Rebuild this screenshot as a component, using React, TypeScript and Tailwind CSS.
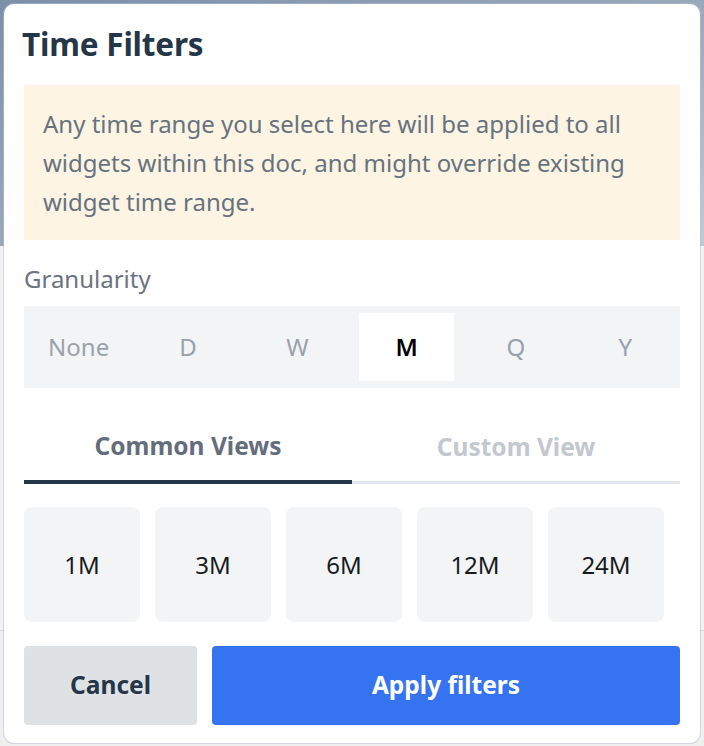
import { useState } from "react";

const granularities = ["None", "D", "W", "M", "Q", "Y"];
const quickViews = ["1M", "3M", "6M", "12M", "24M"];

export default function App() {
  const [granularity, setGranularity] = useState("M");
  const [tab, setTab] = useState<"common" | "custom">("common");

  return (
    <div
      className="relative w-[704px] h-[746px] overflow-hidden bg-[#efefef]"
      style={{ fontFamily: '"Noto Sans", Roboto, sans-serif' }}
    >
      {/* page behind the dialog */}
      <div className="h-[246px] bg-gradient-to-br from-[#7c8fa9] via-[#9aa8bb] to-[#c3cad4]" />
      <div className="h-[385px] bg-[#f2f2f2] border-b border-[#dcdcdc]" />

      {/* dialog */}
      <div className="absolute left-[4px] top-[4px] w-[696px] rounded-[10px] bg-white px-5 pt-5 pb-[18px] shadow-[0_0_0_1px_rgba(180,190,205,0.5)]">
        <div className="h-[40px] flex items-center mb-[21px]">
          <h1 className="-ml-[2px] text-[31.5px] font-bold text-[#243647] tracking-[-0.2px]">
            Time Filters
          </h1>
        </div>

        <div className="bg-[#fdf4e3] px-[19px] py-[19px] text-[24px] leading-[39px] text-[#66737e]">
          Any time range you select here will be applied to all widgets
          within this doc, and might override existing widget time range.
        </div>

        <div className="mt-[21px] mb-[9px] text-[24px] leading-[36px] text-[#6b7280]">
          Granularity
        </div>

        <div className="flex bg-[#f3f4f6] py-[7px]">
          {granularities.map((g) => {
            const active = g === granularity;
            return (
              <div key={g} className="flex-1 px-[7px]">
                <button
                  onClick={() => setGranularity(g)}
                  className={
                    active
                      ? "w-full h-[68px] bg-white text-[24px] font-semibold text-black"
                      : "w-full h-[68px] text-[24px] text-[#99a2aa]"
                  }
                >
                  {g}
                </button>
              </div>
            );
          })}
        </div>

        <div className="mt-[24px] flex items-end">
          <button
            onClick={() => setTab("common")}
            className={
              tab === "common"
                ? "flex-1 h-[72px] border-b-4 border-[#243647] text-[24.5px] font-bold text-[#646d7b]"
                : "flex-1 h-[71px] border-b-[3px] border-[#e2e6ec] text-[24.5px] font-bold text-[#c3c7ce]"
            }
          >
            Common Views
          </button>
          <button
            onClick={() => setTab("custom")}
            className={
              tab === "custom"
                ? "flex-1 h-[72px] border-b-4 border-[#243647] text-[24.5px] font-bold text-[#646d7b]"
                : "flex-1 h-[71px] border-b-[3px] border-[#e2e6ec] text-[24.5px] font-bold text-[#c3c7ce]"
            }
          >
            Custom View
          </button>
        </div>

        <div className="mt-[23px] flex gap-[15px]">
          {quickViews.map((v) => (
            <button
              key={v}
              className="w-[116px] h-[115px] rounded-[8px] bg-[#f3f4f6] text-[24px] text-[#161b22]"
            >
              {v}
            </button>
          ))}
        </div>

        <div className="mt-[24px] flex gap-[15px]">
          <button className="w-[173px] h-[79px] rounded-[4px] bg-[#dfe2e5] text-[24.5px] font-bold text-[#243647]">
            Cancel
          </button>
          <button className="flex-1 h-[79px] rounded-[4px] bg-[#3673f0] text-[24.5px] font-bold text-white">
            Apply filters
          </button>
        </div>
      </div>
    </div>
  );
}
